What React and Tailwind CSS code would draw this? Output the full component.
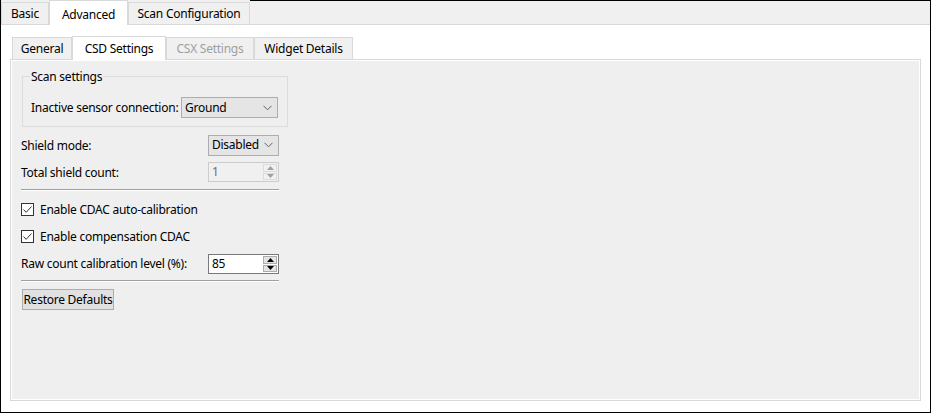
import React from 'react';

function Chevron() {
  return (
    <svg width="9" height="6" viewBox="0 0 9 6" className="shrink-0">
      <path d="M0.5 0.8 L4.5 4.8 L8.5 0.8" fill="none" stroke="#606060" strokeWidth="1" />
    </svg>
  );
}

function Combo({ value, width }) {
  return (
    <div className={`flex items-center justify-between h-[21px] ${width} bg-[#e5e5e5] border border-[#adadad] pl-[3px] pr-[5px]`}>
      <span className="whitespace-nowrap">{value}</span>
      <Chevron />
    </div>
  );
}

function SpinArrows({ disabled }) {
  const fill = disabled ? '#a0a0a0' : '#000000';
  return (
    <div className="flex flex-col w-[15px] h-full py-px pr-px gap-px">
      <div className={`flex-1 flex items-center justify-center border ${disabled ? 'border-[#dcdcdc] bg-[#f0f0f0]' : 'border-[#adadad] bg-[#e5e5e5]'}`}>
        <svg width="7" height="4" viewBox="0 0 7 4"><path d="M3.5 0 L7 4 L0 4 Z" fill={fill} /></svg>
      </div>
      <div className={`flex-1 flex items-center justify-center border ${disabled ? 'border-[#dcdcdc] bg-[#f0f0f0]' : 'border-[#adadad] bg-[#e5e5e5]'}`}>
        <svg width="7" height="4" viewBox="0 0 7 4"><path d="M0 0 L7 0 L3.5 4 Z" fill={fill} /></svg>
      </div>
    </div>
  );
}

function Spin({ value, disabled }) {
  return (
    <div className={`flex items-center h-[20px] w-[71px] border ${disabled ? 'border-[#cccccc] bg-[#f0f0f0] text-[#6d6d6d]' : 'border-[#7a7a7a] bg-white'}`}>
      <span className="flex-1 pl-[3px]">{value}</span>
      <SpinArrows disabled={disabled} />
    </div>
  );
}

function Check({ label, mt }) {
  return (
    <div className={`flex items-center h-[15px] ${mt}`}>
      <div className="w-[13px] h-[13px] border border-[#333333] bg-white flex items-center justify-center">
        <svg width="11" height="11" viewBox="0 0 11 11">
          <path d="M1.5 5.5 L4.2 8.3 L9.5 2.5" fill="none" stroke="#333333" strokeWidth="1" />
        </svg>
      </div>
      <span className="ml-[6px] whitespace-nowrap">{label}</span>
    </div>
  );
}

function Separator({ mt }) {
  return <div className={`h-[2px] w-[258px] border-t border-[#a0a0a0] border-b border-b-white ${mt}`} />;
}

export default function App() {
  const topTabs = [
    { name: 'Basic', w: 'w-[48px]' },
    { name: 'Advanced', w: 'w-[79px]', active: true },
    { name: 'Scan Configuration', w: 'w-[122px]' },
  ];
  const subTabs = [
    { name: 'General', w: 'w-[60px]' },
    { name: 'CSD Settings', w: 'w-[94px]', active: true },
    { name: 'CSX Settings', w: 'w-[88px]', disabled: true },
    { name: 'Widget Details', w: 'w-[99px]' },
  ];

  return (
    <div className="w-[931px] h-[413px] bg-white border-x border-b border-black flex flex-col text-[12px] text-black font-['Segoe_UI','Noto_Sans',sans-serif] leading-[16px] tracking-[-0.25px] whitespace-nowrap">
      {/* top tab bar */}
      <div className="flex items-end h-[25px] bg-[#f0f0f0] shrink-0">
        {topTabs.map(t =>
          t.active ? (
            <div key={t.name} className={`${t.w} h-[25px] bg-white border-x border-t border-[#d9d9d9] flex items-center justify-center pt-[3px] relative z-10`}>
              {t.name}
            </div>
          ) : (
            <div key={t.name} className={`${t.w} h-[23px] border border-[#d9d9d9] flex items-center justify-center pt-px`}>
              {t.name}
            </div>
          )
        )}
        <div className="flex-1 h-full border-t border-black border-b border-b-[#d9d9d9]" />
      </div>

      {/* content */}
      <div className="flex-1 flex flex-col px-[9px] pt-[10px] pb-[11px] -mt-px border-t border-[#d9d9d9]">
        <div className="flex items-end pl-[2px] h-[24px] shrink-0">
          {subTabs.map(t =>
            t.active ? (
              <div key={t.name} className={`${t.w} h-[24px] bg-white border-x border-t border-[#d9d9d9] flex items-center justify-center -mb-px relative z-10 pt-px`}>
                {t.name}
              </div>
            ) : (
              <div key={t.name} className={`${t.w} h-[22px] bg-[#f0f0f0] border-x border-t border-[#d9d9d9] flex items-center justify-center pt-px ${t.disabled ? 'text-[#a0a0a0]' : ''}`}>
                {t.name}
              </div>
            )
          )}
        </div>

        {/* pane */}
        <div className="flex-1 bg-[#efefef] border border-[#d9d9d9] shadow-[inset_-1px_-1px_0_#ffffff,inset_1px_1px_0_#ffffff] pl-[10px] pt-[16px]">
          <div className="relative ml-px w-[266px] h-[51px] border border-[#dcdcdc] pl-[8px] pr-[9px] pt-[20px] flex items-start justify-between">
            <span className="absolute -top-[6px] left-[7px] px-px bg-[#efefef] leading-[12px]">Scan settings</span>
            <span className="mt-[3px]">Inactive sensor connection:</span>
            <Combo value="Ground" width="w-[97px]" />
          </div>

          <div className="flex items-center justify-between w-[258px] mt-[8px] h-[20px]">
            <span className="mt-[2px]">Shield mode:</span>
            <Combo value="Disabled" width="w-[71px] h-[20px]" />
          </div>
          <div className="flex items-center justify-between w-[258px] mt-[7px] h-[20px]">
            <span className="mt-[2px]">Total shield count:</span>
            <Spin value="1" disabled />
          </div>

          <Separator mt="mt-[7px]" />

          <Check label="Enable CDAC auto-calibration" mt="mt-[11px]" />
          <Check label="Enable compensation CDAC" mt="mt-[12px]" />

          <div className="flex items-center justify-between w-[258px] mt-[10px] h-[20px]">
            <span>Raw count calibration level (%):</span>
            <Spin value="85" />
          </div>

          <Separator mt="mt-[6px]" />

          <button className="mt-[7px] ml-px w-[92px] h-[21px] bg-[#e1e1e1] border border-[#adadad] flex items-center justify-center tracking-[-0.25px]">
            Restore Defaults
          </button>
        </div>
      </div>
    </div>
  );
}
